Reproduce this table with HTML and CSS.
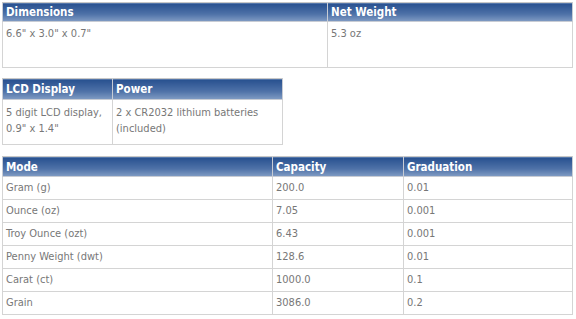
FILE: index.html
```html
<!DOCTYPE html>
<html>
<head>
<meta charset="utf-8">
<link rel="stylesheet" href="styles.css">
</head>
<body>
<div class="page">
  <table class="spec spec-top">
    <tr><th class="c-dim">Dimensions</th><th>Net Weight</th></tr>
    <tr class="tall"><td>6.6" x 3.0" x 0.7"</td><td>5.3 oz</td></tr>
  </table>
  <table class="spec spec-mid">
    <tr class="head-tall"><th class="c-lcd">LCD Display</th><th>Power</th></tr>
    <tr class="tall two"><td>5 digit LCD display,<br>0.9" x 1.4"</td><td>2 x CR2032 lithium batteries<br>(included)</td></tr>
  </table>
  <table class="spec spec-modes">
    <tr class="head-mode"><th class="c-mode">Mode</th><th class="c-cap">Capacity</th><th>Graduation</th></tr>
    <tr><td>Gram (g)</td><td>200.0</td><td>0.01</td></tr>
    <tr><td>Ounce (oz)</td><td>7.05</td><td>0.001</td></tr>
    <tr><td>Troy Ounce (ozt)</td><td>6.43</td><td>0.001</td></tr>
    <tr><td>Penny Weight (dwt)</td><td>128.6</td><td>0.01</td></tr>
    <tr><td>Carat (ct)</td><td>1000.0</td><td>0.1</td></tr>
    <tr><td>Grain</td><td>3086.0</td><td>0.2</td></tr>
  </table>
</div>
</body>
</html>
```
FILE: styles.css
```css
html, body { margin: 0; padding: 0; background: #fff; }
.page {
  padding: 2px 3px 0 2px;
  display: flex;
  flex-direction: column;
  align-items: flex-start;
  gap: 10px;
  font-family: "DejaVu Sans Condensed", "DejaVu Sans", sans-serif;
  font-size: 11px;
}
.spec {
  border-collapse: collapse;
  border: 1px solid #d4d4d4;
}
.spec-top, .spec-modes { width: 571px; }
.spec-mid { width: 281px; }
.spec-modes { margin-top: 1px; }
.spec th {
  height: 18px;
  padding: 0 3px;
  text-align: left;
  font-weight: bold;
  font-size: 11.5px;
  color: #fff;
  background: linear-gradient(#27508f, #4f72a8 60%, #819cc4);
  border: 1px solid #c8ccd4;
  border-top-color: #c8c8c8;
  line-height: 14px;
  vertical-align: middle;
}
.spec tr.head-tall th { height: 20px; }
.spec tr.head-mode th { height: 19px; }
.spec td {
  padding: 0 3px;
  color: #777;
  border: 1px solid #d4d4d4;
  line-height: 14px;
  height: 22px;
  vertical-align: middle;
}
.spec tr.tall td {
  vertical-align: top;
  padding-top: 5px;
  height: 40px;
}
.spec tr.tall.two td {
  line-height: 16px;
  padding-top: 5px;
  height: 39px;
}
.c-dim { width: 318px; }
.c-lcd { width: 103px; }
.c-mode { width: 263px; }
.c-cap { width: 124px; }
```
